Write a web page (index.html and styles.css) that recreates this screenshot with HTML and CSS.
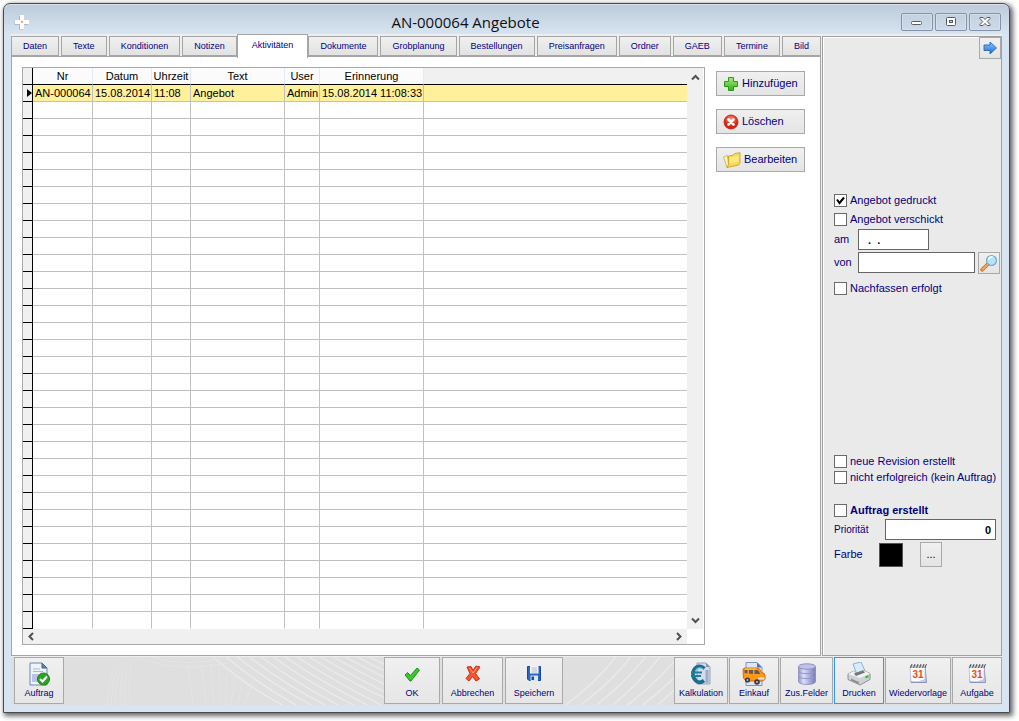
FILE: index.html
```html
<!DOCTYPE html>
<html lang="de">
<head>
<meta charset="utf-8">
<title>AN-000064 Angebote</title>
<link rel="stylesheet" href="styles.css">
</head>
<body>
<div class="window">
  <header class="titlebar">
    <svg class="app-icon" viewBox="0 0 16 16"><path d="M5 2h4.500v4.500H14V11H9.500v4.500H5V11H.5V6.500H5z" fill="#93a3b5" opacity=".6"/><path d="M6 1h4v5h5v4h-5v5H6v-5H1V6h5z" fill="#fff"/><circle cx="8" cy="8" r="1" fill="#f08a3c"/></svg>
    <h1 class="title">AN-000064 Angebote</h1>
    <div class="window-buttons">
      <button class="wbtn" aria-label="Minimieren"><svg viewBox="0 0 14 12"><rect x="1.500" y="5.500" width="10" height="3" rx="1" fill="#fff" stroke="#545c68"/></svg></button>
      <button class="wbtn" aria-label="Maximieren"><svg viewBox="0 0 14 12"><rect x="2.500" y="1.500" width="9" height="8" rx="1" fill="#fff" stroke="#545c68"/><rect x="5.500" y="4.500" width="3" height="2" fill="#b9cada" stroke="#545c68"/></svg></button>
      <button class="wbtn" aria-label="Schließen"><svg viewBox="0 0 14 12"><path d="M2 1.500h3L7 3.600 9 1.500h3v1L9.200 5.500 12 8.500v1H9L7 7.400 5 9.500H2v-1l2.800-3L2 2.500z" fill="#fff" stroke="#545c68"/></svg></button>
    </div>
  </header>

  <main class="client">
    <section class="content">
      <nav class="tabs" role="tablist">
        <button class="tab" role="tab">Daten</button>
        <button class="tab" role="tab">Texte</button>
        <button class="tab" role="tab">Konditionen</button>
        <button class="tab" role="tab">Notizen</button>
        <button class="tab active" role="tab" aria-selected="true">Aktivitäten</button>
        <button class="tab" role="tab">Dokumente</button>
        <button class="tab" role="tab">Grobplanung</button>
        <button class="tab" role="tab">Bestellungen</button>
        <button class="tab" role="tab">Preisanfragen</button>
        <button class="tab" role="tab">Ordner</button>
        <button class="tab" role="tab">GAEB</button>
        <button class="tab" role="tab">Termine</button>
        <button class="tab" role="tab">Bild</button>
      </nav>
      <div class="pane">
        <div class="grid-box">
          <div class="grid-main">
            <table class="grid">
              <colgroup><col class="c-mark"><col class="c-nr"><col class="c-date"><col class="c-time"><col class="c-text"><col class="c-user"><col class="c-rem"><col></colgroup>
              <thead>
                <tr><th class="mark"></th><th>Nr</th><th>Datum</th><th>Uhrzeit</th><th>Text</th><th>User</th><th>Erinnerung</th><th class="rest"></th></tr>
              </thead>
              <tbody id="rows">
                <tr class="selected"><td class="mark"><svg class="pointer" viewBox="0 0 5 8"><path d="M0 0l5 4-5 4z"/></svg></td><td>AN-000064</td><td>15.08.2014</td><td>11:08</td><td>Angebot</td><td>Admin</td><td>15.08.2014 11:08:33</td><td class="rest"></td></tr>
              </tbody>
            </table>
            <div class="vscroll">
              <svg class="arrow" viewBox="0 0 9 9"><path d="M1 6.500l3.500-3.500L8 6.500" /></svg>
              <svg class="arrow" viewBox="0 0 9 9"><path d="M1 2.500l3.500 3.500L8 2.500" /></svg>
            </div>
          </div>
          <div class="hscroll">
            <svg class="arrow" viewBox="0 0 9 9"><path d="M6 1L2.500 4.500 6 8" /></svg>
            <svg class="arrow" viewBox="0 0 9 9"><path d="M3 1l3.500 3.500L3 8" /></svg>
          </div>
        </div>
        <div class="actions">
          <button class="action"><svg class="ico16" viewBox="0 0 16 16"><defs><linearGradient id="gp" x2="0" y2="1"><stop offset="0" stop-color="#a6ec7c"/><stop offset="1" stop-color="#35b01c"/></linearGradient></defs><path d="M5.500 1.500h5v4h4v5h-4v4h-5v-4h-4v-5h4z" fill="url(#gp)" stroke="#2a9a18"/></svg>Hinzufügen</button>
          <button class="action"><svg class="ico16" viewBox="0 0 16 16"><defs><radialGradient id="gr" cy=".3"><stop offset="0" stop-color="#ff8a70"/><stop offset="1" stop-color="#d8220c"/></radialGradient></defs><circle cx="8" cy="8" r="7" fill="url(#gr)" stroke="#b81c0c" stroke-width=".8"/><path d="M5.500 5.500l5 5M10.500 5.500l-5 5" stroke="#fff" stroke-width="2.600" stroke-linecap="round"/></svg>Löschen</button>
          <button class="action"><svg class="ico18" viewBox="0 0 18 16"><path d="M.5 5l4-1.500 1 9.500-1.500 2.500z" fill="#fbf3c8" stroke="#c9a850" stroke-width=".8"/><path d="M5.500 4l4.500-.8 1.500-1.700 5.500-.8v10.300l-1.500 2-11.500 2.500q1.500-2 1.500-4z" fill="#fbd94a" stroke="#c99a1c" stroke-width=".8"/><path d="M6.500 5.500l9.500-2v6l-9.500 2z" fill="#fdea8c" opacity=".8"/></svg>Bearbeiten</button>
        </div>
      </div>
    </section>

    <aside class="side">
      <button class="icon-btn next" aria-label="Weiter"><svg class="ico16" viewBox="0 0 16 16"><defs><linearGradient id="gb" x2="0" y2="1"><stop offset="0" stop-color="#8cc6fa"/><stop offset="1" stop-color="#1c6cd0"/></linearGradient></defs><path d="M2 5h6V2l6.500 6L8 14v-3.500H2z" fill="url(#gb)" stroke="#2568bb" stroke-width=".9"/></svg></button>
      <div class="group first">
        <label class="check"><input type="checkbox" checked>Angebot gedruckt</label>
        <label class="check"><input type="checkbox">Angebot verschickt</label>
        <div class="field"><label class="lbl" for="am">am</label><input class="text date" id="am" type="text" value=" .  ."></div>
        <div class="field"><label class="lbl" for="von">von</label><input class="text von" id="von" type="text"><button class="icon-btn" aria-label="Suchen"><svg class="ico18" viewBox="0 0 18 18"><path d="M8.500 9.500L2.200 15.800" stroke="#b86a28" stroke-width="3.600" stroke-linecap="round"/><path d="M7.600 10.400L2.400 15.600" stroke="#f9a446" stroke-width="2.200" stroke-linecap="round"/><circle cx="11.500" cy="6.500" r="5" fill="#b4e3fa" stroke="#7ba6c8" stroke-width="1.200"/><path d="M8.500 5.500a3.500 3.500 0 0 1 4-2.500" stroke="#fff" stroke-width="1.500" fill="none"/></svg></button></div>
        <label class="check late"><input type="checkbox">Nachfassen erfolgt</label>
      </div>
      <div class="group second">
        <label class="check tight"><input type="checkbox">neue Revision erstellt</label>
        <label class="check tight"><input type="checkbox">nicht erfolgreich (kein Auftrag)</label>
        <label class="check strong"><input type="checkbox">Auftrag erstellt</label>
        <div class="field"><label class="lbl wide" for="prio">Priorität</label><input class="text prio" id="prio" type="text" value="0"></div>
        <div class="field color"><span class="lbl">Farbe</span><span class="swatch"></span><button class="icon-btn dots">...</button></div>
      </div>
    </aside>
  </main>

  <footer class="toolbar">
    <svg class="waves" viewBox="0 0 990 48" preserveAspectRatio="none" aria-hidden="true">
      <g fill="none" stroke="#ebebeb" stroke-width="1.300">
        <path d="M202 0Q235 29 271 48M215 0Q248 28 285 48M226 0Q262 28 300 48M238 0Q274 28 314 48M250 0Q286 27 327 48M262 0Q298 26 342 48M274 0Q310 25 356 48M286 0Q322 24 370 48M298 0Q332 22 380 44M310 0Q342 20 380 38M322 0Q350 16 380 31M334 0Q358 13 380 24M346 0Q362 9 380 17M358 0L380 11"/>
        <path d="M554 48Q585 25 604 0M569 48Q600 25 619 0M585 48Q614 25 634 0M601 48Q629 25 648 0M616 48Q643 27 664 3M631 48Q650 33 664 19M646 48L664 32"/>
      </g>
      <g fill="none" stroke="#e4e4e4" stroke-width=".8">
        <path d="M105 4Q98 24 96 48M108 4Q101 24 100 48M111 4Q105 24 104 48M114 4Q109 24 109 48M117 4Q113 24 114 48M120 4Q117 24 119 48M176 4L182 48M190 4L195 48M199 4L203 48M208 6L209 48M216 10L214 48M224 14L220 48M232 20L226 48M242 26L232 48M130 2Q170 16 215 6M140 0Q170 10 210 2"/>
      </g>
    </svg>
    <button class="tool w50"><svg class="ico24" viewBox="0 0 24 24"><path d="M3 1h12l5 5v17H3z" fill="#eef3fc" stroke="#6d87b4"/><path d="M15 1v5h5z" fill="#5a80bf" stroke="#41649c"/><path d="M6 7h7M6 9.500h10" stroke="#a9b8d2"/><path d="M5 12h7v8H5z" fill="#b9c4e8"/><circle cx="16.500" cy="17" r="6" fill="#2ba51e" stroke="#168010"/><path d="M13 17l2.500 2.500 4.500-5" fill="none" stroke="#fff" stroke-width="2"/></svg>Auftrag</button>
    <div class="tool-group middle">
      <button class="tool w56"><svg class="ico24" viewBox="0 0 24 24"><path d="M5 13l2.500-2.500 3 3L17 6l2.500 2-8.500 11h-1z" fill="#3cc52c" stroke="#1c941a" stroke-linejoin="round"/></svg>OK</button>
      <button class="tool w61"><svg class="ico24" viewBox="0 0 24 24"><path d="M6 5l4-.5 2 4 3-4.500 4 1-4.500 6.500 4 5.500-3.500 2-3.500-4.500-3.500 4.500-3-2.500 4-5z" fill="#f4552f" stroke="#cf2c12" stroke-linejoin="round"/><path d="M8.500 6l3.500 5 4-5.500" fill="none" stroke="#ff9c78"/></svg>Abbrechen</button>
      <button class="tool w58"><svg class="ico24" viewBox="0 0 24 24"><path d="M5.500 4.500h13v14H7l-1.500-1.500z" fill="#2766c4" stroke="#174a98"/><path d="M8 4h8.500v7.500H8z" fill="#f4f6fa"/><path d="M9.500 6h5.500M9.500 8h5.500M9.500 10h5.500" stroke="#b2bac8"/><path d="M8.500 13.500h7.500V19H8.500z" fill="#dbe5f2"/><path d="M9.500 14.500H12V18H9.500z" fill="#22477e"/></svg>Speichern</button>
    </div>
    <div class="tool-group">
      <button class="tool w54"><svg class="ico24" viewBox="0 0 24 24"><path d="M8 1h9l4 4v17H8z" fill="#d5dbea" stroke="#97a2bc"/><path d="M17 1v4h4z" fill="#8493b8"/><path d="M18 8v13" stroke="#9faac4" stroke-width="3"/><path d="M15.500 6.500C10 1.500 4 6 4 12s5.500 11 11 6.500" fill="none" stroke="#16708c" stroke-width="3.600"/><path d="M14 7C10 4 6 7 6 12" fill="none" stroke="#70bdd0" stroke-width="1.200"/><path d="M2 10.500h11M2 14h10" stroke="#1e7f9c" stroke-width="1.800"/></svg>Kalkulation</button>
      <button class="tool w50"><svg class="ico24" viewBox="0 0 24 24"><path d="M4 .5h11l5 5v18H4z" fill="#dce6f8" stroke="#7d95bf"/><path d="M15 .5v5h5z" fill="#4c74bb"/><path d="M1 8q0-2 2-2h12q3 0 4.500 4.500 3.500.5 3.500 3v4l-3 1.500H4L1.500 16z" fill="#ff9819" stroke="#d96a0a"/><path d="M2.500 8h3v3.500l-3-.5zM7 8h4v4L7 11.500zM12.500 8h3q2 1 2.500 4h-5.500z" fill="#655a54"/><path d="M3 7h11" stroke="#ffce73"/><path d="M16 15.500h6.500v2H16z" fill="#e8e3dc"/><circle cx="5.500" cy="18" r="2.600" fill="#3b3b42"/><circle cx="5.500" cy="18" r="1" fill="#bbb"/><circle cx="15" cy="20" r="2.800" fill="#3b3b42"/><circle cx="15" cy="20" r="1.100" fill="#bbb"/></svg>Einkauf</button>
      <button class="tool w52"><svg class="ico24" viewBox="0 0 24 24"><defs><linearGradient id="gc"><stop offset="0" stop-color="#9496ca"/><stop offset=".3" stop-color="#dcdef8"/><stop offset="1" stop-color="#7778b6"/></linearGradient></defs><path d="M3.500 4.500v15c0 4 17 4 17 0v-15z" fill="url(#gc)" stroke="#8082b8" stroke-width=".7"/><path d="M3.500 9c0 3.500 17 3.500 17 0M3.500 14c0 3.500 17 3.500 17 0" fill="none" stroke="#9496c8"/><ellipse cx="12" cy="4.500" rx="8.500" ry="2.700" fill="#c0c2ea" stroke="#8f91c6"/></svg>Zus.Felder</button>
      <button class="tool w50 focus"><svg class="ico24" viewBox="0 0 24 24"><path d="M6 2l8-2 4 9-8 3.500z" fill="#d7edff" stroke="#86b3dc"/><path d="M1 12l6-3 1.500 2.500 8-3L23 11.500v6L13 23 1 17.500z" fill="#d0d1d5" stroke="#8f9197"/><path d="M1 12l6-3 1.500 2.500 8-3L23 11.500 13 16z" fill="#f1f2f4"/><path d="M7 11.500l2 2.500 9-3.500-2-2z" fill="#71757d"/><path d="M4 16.500l8 3.500v2l-8-3.500z" fill="#8b8e94"/><path d="M18.500 15.500l3-1.300" stroke="#2fbc33" stroke-width="2"/></svg>Drucken</button>
      <button class="tool w65"><svg class="ico24" viewBox="0 0 24 24"><path d="M5 4.500h14l1.500 16H5z" fill="#c8cbed" stroke="#8c90be"/><path d="M4 4h15v13.500q-6 3.500-14 2z" fill="#fdfdff" stroke="#b8b9d2" stroke-width=".7"/><path d="M4 3h16v3H4z" fill="#c4c4cc"/><path d="M4.500 6L6 2M7.500 6L9 2M10.500 6L12 2M13.500 6L15 2M16.500 6L18 2M19 6l1.500-4" stroke="#54545c"/><text class="day" x="6.500" y="15.500">31</text></svg>Wiedervorlage</button>
      <button class="tool w50"><svg class="ico24" viewBox="0 0 24 24"><path d="M5 4.500h14l1.500 16H5z" fill="#c8cbed" stroke="#8c90be"/><path d="M4 4h15v13.500q-6 3.500-14 2z" fill="#fdfdff" stroke="#b8b9d2" stroke-width=".7"/><path d="M4 3h16v3H4z" fill="#c4c4cc"/><path d="M4.500 6L6 2M7.500 6L9 2M10.500 6L12 2M13.500 6L15 2M16.500 6L18 2M19 6l1.500-4" stroke="#54545c"/><text class="day" x="6.500" y="15.500">31</text></svg>Aufgabe</button>
    </div>
  </footer>
</div>
<script src="script.js"></script>
</body>
</html>
```
FILE: styles.css
```css
* { box-sizing: border-box; }

body {
  margin: 0;
  padding: 3px 9px 8px 3px;
  min-height: 100vh;
  display: flex;
  background: #fff;
  color: #000080;
  font: 11px/13px "Liberation Sans", Arial, sans-serif;
}

button, input { font: inherit; color: inherit; margin: 0; }

svg { display: block; flex: none; }

.window {
  flex: 1;
  min-width: 0;
  display: flex;
  flex-direction: column;
  padding: 0 7px 7px;
  border: 1px solid #47494c;
  border-radius: 7px 7px 0 0;
  background: linear-gradient(#bccad9, #d7e4f2 30px);
  box-shadow: inset 0 1px #dbe4ee, 2px 2px 5px 1px rgba(0, 0, 0, .6);
}

/* title bar */
.titlebar { display: flex; align-items: center; height: 30px; padding: 5px 1px 0 3px; }
.app-icon { width: 16px; height: 16px; }
.title {
  flex: 1;
  margin: 0;
  text-align: center;
  color: #111;
  font: 15px/20px "Open Sans", "Noto Sans", sans-serif;
}
.window-buttons { display: flex; gap: 2px; }
.wbtn {
  display: flex;
  align-items: center;
  justify-content: center;
  width: 32px;
  height: 18px;
  padding: 0;
  border: 1px solid #8391aa;
  border-radius: 2px;
  background: linear-gradient(#c2d0df, #cddbe9);
  box-shadow: inset 0 0 0 1px #d5e0eb;
}
.wbtn svg { width: 14px; height: 12px; }

.client { flex: 1; display: flex; background: #eee; }
.content { flex: 1; min-width: 0; display: flex; flex-direction: column; }

/* tabs */
.tabs { display: flex; align-items: flex-end; gap: 2px; height: 22px; }
.tab {
  flex: 1 1 auto;
  height: 20px;
  padding: 0 10px;
  border: 1px solid #a5a5a5;
  background: linear-gradient(#f0f0f0, #e2e2e2);
  font-size: 9px;
  line-height: 16px;
  white-space: nowrap;
}
.tab.active {
  z-index: 1;
  height: 24px;
  margin: 0 -2px -2px;
  padding: 0 13px 4px;
  border-bottom: 0;
  background: #fff;
}

.pane {
  flex: 1;
  display: flex;
  gap: 11px;
  padding: 10px 15px 10px 10px;
  border: 1px solid #a5a5a5;
  background: #fff;
}

/* data grid */
.grid-box { flex: 1; min-width: 0; display: flex; flex-direction: column; border: 1px solid #a9a9a9; }
.grid-main { flex: 1; display: flex; align-items: stretch; }
.grid { flex: 1; align-self: flex-start; table-layout: fixed; border-spacing: 0; color: #000; width: 0; }
.c-mark { width: 10px; }
.c-nr { width: 60px; }
.c-date { width: 59px; }
.c-time { width: 39px; }
.c-text { width: 94px; }
.c-user { width: 35px; }
.c-rem { width: 104px; }
.grid th {
  height: 17px;
  padding: 0;
  border-right: 1px solid #e4ebf8;
  border-bottom: 1px solid #000;
  background: #fbfbfc;
  font-weight: normal;
  line-height: 14px;
}
.grid td {
  height: 17px;
  padding: 0 2px;
  border-right: 1px solid #c0c0c0;
  border-bottom: 1px solid #c0c0c0;
  line-height: 14px;
  white-space: nowrap;
}
.grid .mark { padding: 0; border-right: 1px solid #000; border-bottom: 1px solid #000; background: #f0f0f0; }
.grid th.rest { border-right: 0; background: #f0f0f0; }
.grid td.rest { border-right: 0; }
.grid .selected td { background: #fff09c; }
.grid .selected .mark { background: #f0f0f0; }
.grid tbody tr:last-child td { border-bottom-color: #fff; }
.grid tbody tr:last-child .mark { border-bottom-color: #000; }
.pointer { width: 5px; height: 8px; margin-left: auto; }

.vscroll {
  display: flex;
  flex-direction: column;
  align-items: center;
  justify-content: space-between;
  width: 16px;
  padding: 5px 0 4px;
  margin-right: 1px;
  background: #f0f0f0;
}
.hscroll {
  display: flex;
  align-items: center;
  justify-content: space-between;
  height: 15px;
  margin-right: 17px;
  padding: 0 4px;
  background: #f0f0f0;
}
.arrow { width: 9px; height: 9px; fill: none; stroke: #505050; stroke-width: 2; }

.actions { display: flex; flex-direction: column; gap: 13px; width: 89px; padding-top: 4px; }
.action {
  display: flex;
  align-items: center;
  gap: 3px;
  height: 25px;
  padding: 0 6px;
  border: 1px solid #a9a9a9;
  background: linear-gradient(#f0f0f0, #e4e4e4);
  white-space: nowrap;
}
.ico16 { width: 16px; height: 16px; }
.ico18 { width: 18px; height: 18px; }
.ico24 { width: 24px; height: 24px; }
.day { font: bold 10px "Liberation Sans", Arial, sans-serif; fill: #ee4d10; }

/* side panel */
.side {
  display: flex;
  flex-direction: column;
  width: 180px;
  margin: 2px 0 0 1px;
  padding: 0 0 88px;
  border: 1px solid #a0a0a0;
  box-shadow: inset 1px 1px #fff;
  background: #eaeaea;
}
.group { display: flex; flex-direction: column; padding-left: 11px; }
.first { margin-top: 132px; }
.second { margin-top: auto; }
.check { display: flex; align-items: center; gap: 3px; height: 19px; white-space: nowrap; }
.check.tight { height: 16px; }
.check.late { margin-top: 6px; }
.check.strong { height: 17px; margin-top: 17px; font-weight: bold; }
.check input {
  appearance: none;
  flex: none;
  width: 13px;
  height: 13px;
  border: 1px solid #6b6b6b;
  background: #fff;
}
.check input:checked {
  background: #fff url("data:image/svg+xml,%3Csvg xmlns='http://www.w3.org/2000/svg' viewBox='0 0 11 11'%3E%3Cpath d='M2 4.500l2.500 3.500L9 2.500' fill='none' stroke='%23000' stroke-width='2'/%3E%3C/svg%3E");
}
.field { display: flex; align-items: center; height: 21px; }
.field + .field { margin-top: 2px; }
.lbl { width: 24px; }
.lbl.wide { width: 51px; font-size: 10px; }
.text {
  height: 21px;
  padding: 0 4px;
  border: 1px solid #666;
  border-radius: 0;
  background: #fff;
  color: #000;
}
.date { width: 71px; padding: 0 6px; font-weight: bold; white-space: pre; }
.von { width: 117px; margin-right: 3px; }
.prio { width: 111px; font-weight: bold; text-align: right; }
.icon-btn {
  display: flex;
  align-items: center;
  justify-content: center;
  width: 22px;
  height: 22px;
  padding: 0;
  border: 1px solid #a9a9a9;
  background: linear-gradient(#f0f0f0, #e4e4e4);
}
.next { align-self: flex-end; }
.field.color { height: 25px; }
.color .lbl { width: 45px; }
.swatch { width: 24px; height: 24px; border: 1px solid #555; background: #000; }
.dots { height: 25px; margin-left: 17px; color: #000; }

/* bottom toolbar */
.toolbar {
  position: relative;
  display: flex;
  align-items: flex-start;
  height: 49px;
  padding: 0 0 0 3px;
  background: #dfdfdf;
  border-top: 1px solid #eee;
}
.waves { position: absolute; inset: 0; width: 100%; height: 100%; }
.tool-group { position: relative; display: flex; gap: 1px; }
.middle { gap: 2px; margin: 0 111px 0 auto; }
.tool {
  position: relative;
  display: flex;
  flex-direction: column;
  align-items: center;
  justify-content: space-between;
  height: 47px;
  padding: 4px 0 4px;
  border: 1px solid #a9a9a9;
  background: linear-gradient(#f0f0f0, #e6e6e6);
  font-size: 9px;
  line-height: 11px;
  white-space: nowrap;
}
.tool.focus { border-color: #3399ff; }
.w50 { width: 50px; }
.w52 { width: 53px; }
.w54 { width: 54px; }
.w56 { width: 56px; }
.w58 { width: 58px; }
.w61 { width: 61px; }
.w65 { width: 66px; }
```
FILE: script.js
```js
// Fill the grid with empty rows below the data.
const body = document.getElementById("rows");
for (let i = 0; i < 31; i++) {
  const row = body.insertRow();
  for (let c = 0; c < 8; c++) {
    const cell = row.insertCell();
    if (c === 0) cell.className = "mark";
    if (c === 7) cell.className = "rest";
  }
}
```
